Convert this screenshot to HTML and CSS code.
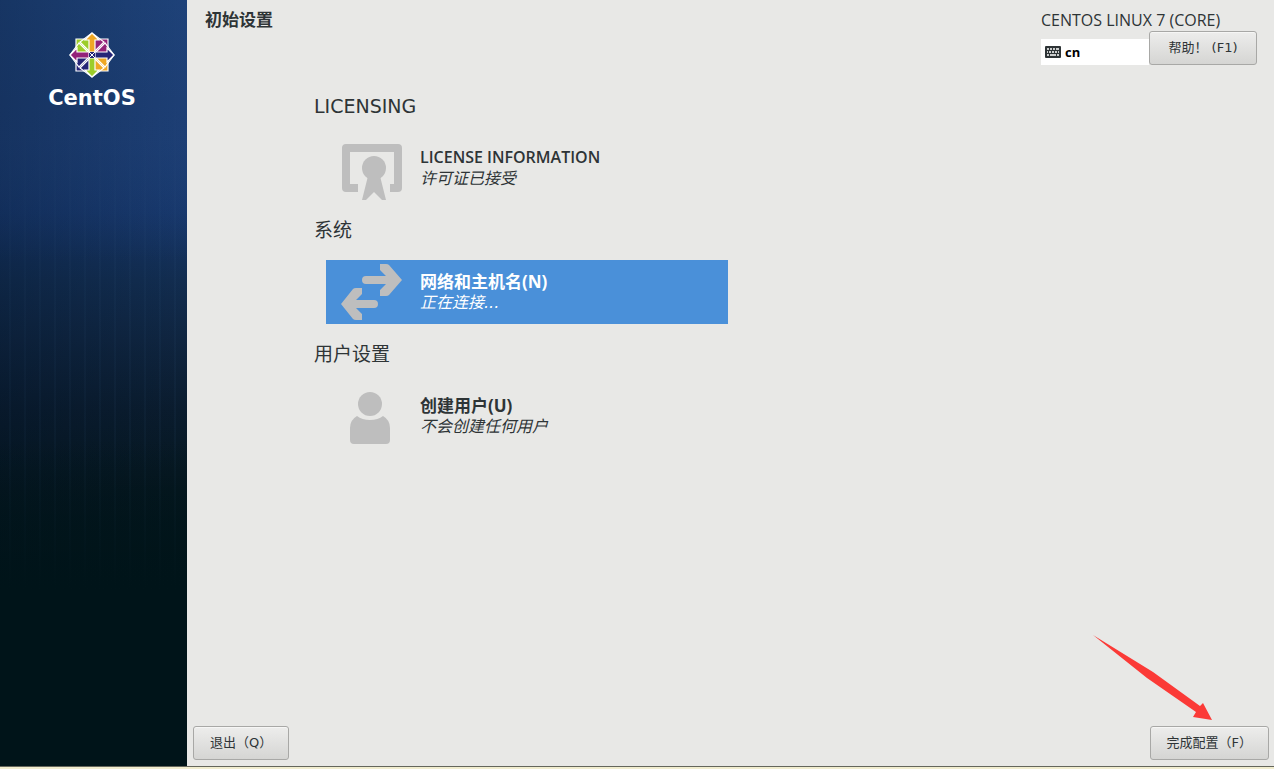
FILE: index.html
```html
<!DOCTYPE html>
<html lang="zh-CN">
<head>
<meta charset="utf-8">
<title>初始设置</title>
<link rel="stylesheet" href="styles.css">
</head>
<body>
<div class="app">
  <aside class="sidebar">
    <svg class="logo-mark" viewBox="-24 -24 48 48" aria-hidden="true">
      <g stroke="#fff" stroke-width="1.200">
        <path d="M-16-16H0V0H-16z" fill="#9ccd2a"/>
        <path d="M0-16H16V0H0z" fill="#932279"/>
        <path d="M-16 0H0V16H-16z" fill="#262577"/>
        <path d="M0 0H16V16H0z" fill="#efa724"/>
        <path d="M-3-4-12-13 0-22 12-13 3-4" fill="none"/>
        <path d="M-3 4-12 13 0 22 12 13 3 4" fill="none"/>
        <path d="M-4-3-13-12-22 0-13 12-4 3" fill="none"/>
        <path d="M4-3 13-12 22 0 13 12 4 3" fill="none"/>
        <path d="M-3-3V-15H-7L0-22 7-15H3V-3z" fill="#efa724"/>
        <path d="M-3 3V15H-7L0 22 7 15H3V3z" fill="#9ccd2a"/>
        <path d="M-3-3H-15V-7L-22 0-15 7V3H-3z" fill="#932279"/>
        <path d="M3-3H15V-7L22 0 15 7V3H3z" fill="#262577"/>
      </g>
      <path d="M-3-3H3V3H-3z" fill="#262577"/>
      <path d="M-3-3 3 3M3-3-3 3" stroke="#fff"/>
    </svg>
    <span class="logo-text">CentOS</span>
  </aside>
  <main class="main">
    <header class="header">
      <h1 class="title">初始设置</h1>
      <div class="product">
        <p class="product-name">CENTOS LINUX 7 (CORE)</p>
        <div class="product-tools">
          <button class="layout-indicator" type="button">
            <svg class="keyboard-icon" viewBox="0 0 16 12" aria-hidden="true">
              <rect width="16" height="12" rx="1" fill="#2e3436"/>
              <path d="M2 3h2M5 3h2M8 3h2M11 3h3M2 6h1M4 6h2M7 6h2M10 6h2M13 6h1M2 9h2M5 9h6M12 9h2" stroke="#fff" stroke-width="1.500"/>
            </svg>
            <span>cn</span>
          </button>
          <button class="button button-help" type="button">帮助！ (F1)</button>
        </div>
      </div>
    </header>
    <div class="sections">
      <section class="section">
        <h2 class="section-title section-title-latin">LICENSING</h2>
        <button class="spoke" type="button">
          <svg class="spoke-icon" viewBox="0 0 64 64" aria-hidden="true">
            <path d="M6 8H58Q62 8 62 12V52Q62 56 58 56H50V48H54V16H10V48H18V56H6Q2 56 2 52V12Q2 8 6 8z"/>
            <circle cx="34" cy="32" r="12"/>
            <path d="M28 40H40L46 64H42L34 56 26 64H22z"/>
          </svg>
          <span class="spoke-text"><strong class="spoke-name spoke-name-latin">LICENSE INFORMATION</strong><em class="spoke-status">许可证已接受</em></span>
        </button>
      </section>
      <section class="section">
        <h2 class="section-title">系统</h2>
        <button class="spoke spoke-selected" type="button">
          <svg class="spoke-icon" viewBox="0 0 64 64" aria-hidden="true">
            <path d="M26 16H46L40 10V4H46Q48 4 49 5L62 20 49 35Q48 36 46 36H40V30L46 24H26Q22 24 22 20T26 16z"/>
            <path d="M34 40H16L22 34V28H16Q14 28 13 29L1 44 13 59Q14 60 16 60H22V54L16 48H34Q38 48 38 44T34 40z"/>
          </svg>
          <span class="spoke-text"><strong class="spoke-name">网络和主机名(N)</strong><em class="spoke-status">正在连接...</em></span>
        </button>
      </section>
      <section class="section">
        <h2 class="section-title">用户设置</h2>
        <button class="spoke" type="button">
          <svg class="spoke-icon" viewBox="0 0 64 64" aria-hidden="true">
            <circle cx="30" cy="20" r="12"/>
            <path d="M17 32Q22 36 30 36T43 32Q50 36 50 44V56Q50 60 46 60H14Q10 60 10 56V44Q10 36 17 32z"/>
          </svg>
          <span class="spoke-text"><strong class="spoke-name">创建用户(U)</strong><em class="spoke-status">不会创建任何用户</em></span>
        </button>
      </section>
    </div>
    <footer class="footer">
      <button class="button" type="button">退出（Q）</button>
      <div class="finish">
        <svg class="pointer" viewBox="0 0 120 86" aria-hidden="true">
          <path d="M0 0 60 37 107 71 110 68 119 85 100 82 103 77 54 43z" fill="#fb3a37"/>
        </svg>
        <button class="button" type="button">完成配置（F）</button>
      </div>
    </footer>
  </main>
</div>
</body>
</html>
```
FILE: styles.css
```css
* {
  box-sizing: border-box;
}

body {
  margin: 0;
  background: #f1edcf;
  color: #2e3436;
  font-family: "Open Sans", "Noto Sans CJK SC", sans-serif;
  font-size: 16px;
}

h1, h2, p {
  margin: 0;
}

button {
  font-family: inherit;
  color: inherit;
}

.app {
  display: flex;
  min-height: calc(100vh - 2px);
  border-bottom: 1px solid #64665c;
}

.sidebar {
  flex: 0 0 187px;
  display: flex;
  flex-direction: column;
  align-items: center;
  padding: 31px 3px 0 0;
  background:
    linear-gradient(transparent 440px, #001419 590px),
    linear-gradient(90deg, rgba(0, 15, 35, 0.25), transparent),
    linear-gradient(#1e4279 0, #1d3f75 100px, transparent 260px),
    repeating-linear-gradient(90deg, transparent 0 9px, rgba(60, 100, 140, 0.08) 9px 11px, transparent 11px 15px),
    linear-gradient(#1e4279 0, #1c3e74 140px, #16366a 210px, #122d50 280px, #0f2540 340px, #0a1c2e 410px, #05171f 490px, #001419 590px);
}

.logo-mark {
  width: 48px;
  height: 48px;
}

.logo-text {
  color: #fff;
  font-family: "DejaVu Sans", sans-serif;
  font-size: 21px;
  font-weight: bold;
  line-height: 38px;
}

.main {
  flex: 1;
  display: flex;
  flex-direction: column;
  background: #e8e8e6;
}

.header {
  display: flex;
  justify-content: space-between;
  padding: 10px 17px 0 18px;
}

.title {
  font-size: 17px;
  line-height: 20px;
}

.product-name {
  font-size: 16px;
  line-height: 21px;
  white-space: nowrap;
}

.product-tools {
  display: flex;
  align-items: flex-end;
}

.layout-indicator {
  display: flex;
  align-items: center;
  gap: 4px;
  width: 108px;
  height: 26px;
  padding: 0 4px;
  border: 0;
  background: #fff;
  color: #000;
  font-size: 13px;
  font-weight: bold;
}

.keyboard-icon {
  width: 16px;
  height: 12px;
}

.button {
  height: 34px;
  padding: 0 16px 4px;
  border: 1px solid #a8a8a6;
  border-radius: 3px;
  background: linear-gradient(#ededec, #d5d5d3);
  box-shadow: inset 0 1px #f6f6f5;
  font-family: "DejaVu Sans", "Noto Sans CJK SC", sans-serif;
  font-size: 13px;
}

.button-help {
  min-width: 108px;
}

.sections {
  display: flex;
  flex-direction: column;
  gap: 12px;
  padding: 23px 127px 0;
}

.section-title {
  font-size: 19px;
  font-weight: normal;
  line-height: 36px;
}

.section-title-latin {
  font-family: "DejaVu Sans", sans-serif;
}

.spoke {
  display: flex;
  align-items: center;
  gap: 16px;
  width: calc(50% - 15px);
  height: 64px;
  margin: 12px 0 0 12px;
  padding: 0 14px;
  border: 0;
  background: none;
  text-align: left;
}

.spoke-selected {
  background: #4a90d9;
  color: #fff;
}

.spoke-icon {
  flex: none;
  width: 64px;
  height: 64px;
  fill: #bebebe;
}

.spoke-text {
  display: flex;
  flex-direction: column;
}

.spoke-name {
  font-size: 17px;
  line-height: 21px;
}

.spoke-name-latin {
  font-size: 16px;
  font-weight: 600;
}

.spoke-status {
  font-family: "DejaVu Sans", "Noto Sans CJK SC", sans-serif;
  font-size: 16px;
  line-height: 21px;
}

.footer {
  display: flex;
  justify-content: space-between;
  margin-top: auto;
  padding: 6px 5px 6px 6px;
}

.finish {
  position: relative;
}

.pointer {
  position: absolute;
  right: 56px;
  bottom: 39px;
  width: 120px;
  height: 86px;
}
```
